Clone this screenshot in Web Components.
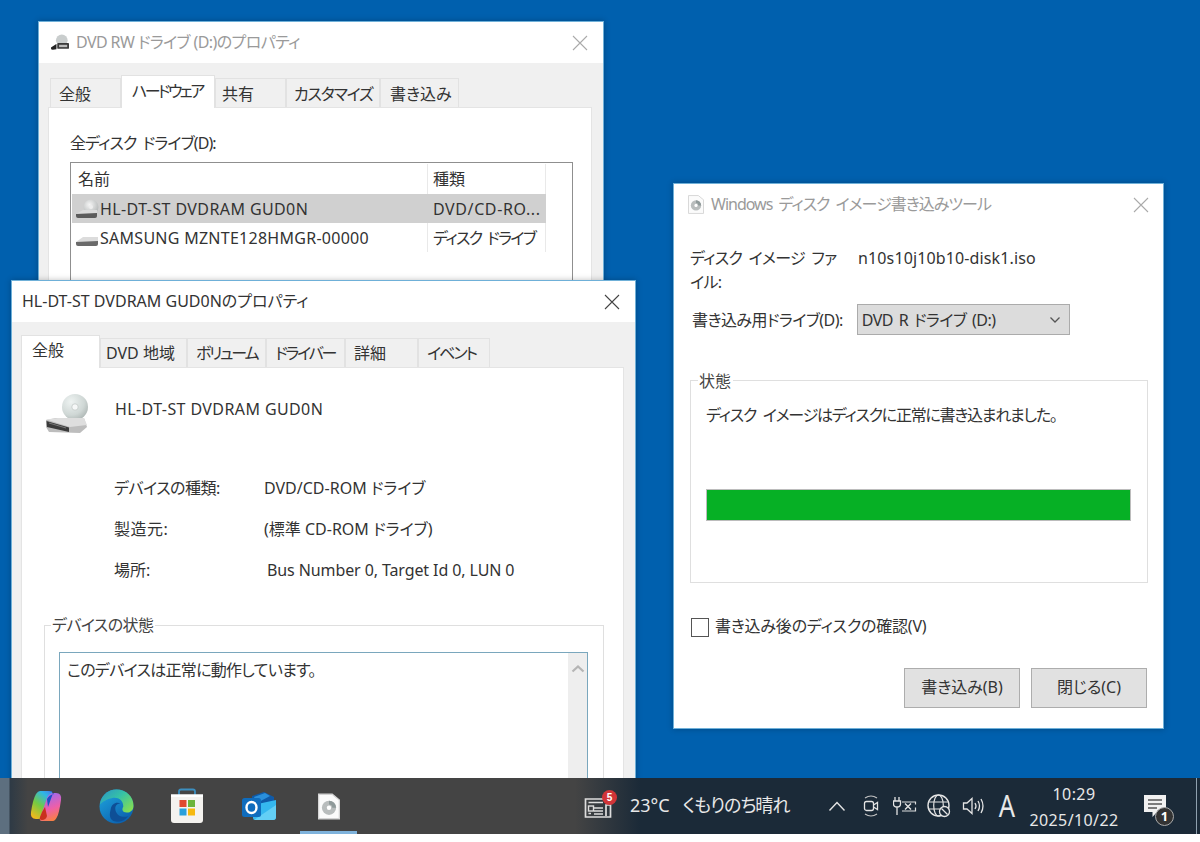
<!DOCTYPE html>
<html lang="ja"><head><meta charset="utf-8"><title>Desktop</title>
<style>
html,body{margin:0;padding:0;width:1200px;height:842px;overflow:hidden;background:#fff}
body{display:flex;flex-direction:column;font:16px/1.2 "Noto Sans","Noto Sans CJK JP",sans-serif;font-feature-settings:"palt";color:#333}
win-desktop{flex:0 0 778px}
task-bar{flex:0 0 56px}
#w1{left:38px;top:21px;width:566px;height:420px;--tl:2px;--tp:4px;--sb:0px}
#w2{left:11px;top:280px;width:625px;height:520px;--tl:0px;--tp:2px;--sb:3px}
#w3{left:673px;top:183px;width:491px;height:546px}
</style></head><body>
<win-desktop>
  <win-frame id="w1" heading="DVD RW ドライブ (D:)のプロパティ" ls="-.6" inactive icon="dvd" bodypad="12px 11px 0 9px">
    <win-tabs>
      <win-tab w="71" pl="8">全般</win-tab><win-tab w="94" pl="10" ls="-2.6" selected>ハードウェア</win-tab><win-tab w="71" pl="6">共有</win-tab><win-tab w="94" pl="7" ls="-1.2">カスタマイズ</win-tab><win-tab w="79" pl="9">書き込み</win-tab>
    </win-tabs>
    <win-panel pad="25px 18px 0 21px"><disk-list></disk-list></win-panel>
  </win-frame>
  <win-frame id="w2" heading="HL-DT-ST DVDRAM GUD0Nのプロパティ" bodypad="13px 11px 0 9px">
    <win-tabs>
      <win-tab w="79" pl="10" selected>全般</win-tab><win-tab w="87" pl="5">DVD 地域</win-tab><win-tab w="79" pl="8" ls="-2.2">ボリューム</win-tab><win-tab w="79" pl="8" ls="-2.2">ドライバー</win-tab><win-tab w="73" pl="8">詳細</win-tab><win-tab w="72" pl="8" ls="-2">イベント</win-tab>
    </win-tabs>
    <win-panel pad="26px 19px 0 22px"><device-general></device-general></win-panel>
  </win-frame>
  <win-frame id="w3" heading="Windows ディスク イメージ書き込みツール" ls="-1" ws="3" inactive icon="file" bodypad="0" white>
    <burn-form></burn-form>
  </win-frame>
</win-desktop>
<task-bar></task-bar>
<script>
const svg=(w,h,vb,inner,extra='')=>`<svg xmlns="http://www.w3.org/2000/svg" width="${w}" height="${h}" viewBox="${vb}" ${extra} style="display:block;flex:none">${inner}</svg>`;
const sp=(ls,t,ws=0)=>`<span style="letter-spacing:${ls}px;word-spacing:${ws}px">${t}</span>`;
let uid=0;
const ICON={
  disc(w,h){const id='d'+(++uid);return svg(w,h,'0 0 44 40',`<defs><radialGradient id="${id}" cx=".35" cy=".3" r=".85"><stop offset="0" stop-color="#eef3f2"/><stop offset=".6" stop-color="#cfd7d5"/><stop offset="1" stop-color="#a3acaa"/></radialGradient></defs>
    <circle cx="31" cy="13" r="13" fill="url(#${id})"/><circle cx="31" cy="13" r="3.2" fill="#f6f8f8" stroke="#b5bcbb" stroke-width=".6"/>
    <path d="M2 26 12 24 40 24 43 33 36 39 5 38 2 33Z" fill="#bdbdbd"/><path d="M2 25.5 14 24 40 24 43 31 26 33Z" fill="#dedede"/>
    <path d="M2.5 27 25 33.5 25 38 3 33Z" fill="#3a3a3a"/><path d="M5 29 22 34" stroke="#777" stroke-width="1"/>`)},
  drive(w,h){return svg(w,h,'0 0 24 20',`<path d="M1 13 8 8 23 8 23 13 8 14Z" fill="#dcdcdc"/><path d="M1 13 23 12 23 15Q23 17 21 17L3 17Q1 17 1 15Z" fill="#6a6a6a"/>`)},
  discsm(w,h){const id='d'+(++uid);return svg(w,h,'0 0 24 22',`<defs><radialGradient id="${id}" cx=".4" cy=".35" r=".8"><stop offset="0" stop-color="#f5f5f5"/><stop offset="1" stop-color="#a9adad"/></radialGradient></defs><circle cx="16" cy="8" r="7.5" fill="url(#${id})"/><circle cx="16" cy="8" r="2" fill="#eee"/><path d="M1 15 8 11 22 11 22 15 8 16Z" fill="#dcdcdc"/><path d="M1 15 22 14 22 17Q22 19 20 19L3 19Q1 19 1 17Z" fill="#5c5c5c"/>`)},
  dvd(w,h){return svg(w,h,'0 0 22 20',`<circle cx="13" cy="7" r="6.5" fill="#c9cdcd"/><path d="M1 15 7 11 21 10 21 15 7 16Z" fill="#d8d8d8"/><path d="M1 15 7 11 7 17 3 17.5Q1 17.5 1 16Z" fill="#222"/><rect x="8" y="10" width="13" height="6.5" rx="1" fill="#3b3b3b"/><rect x="10" y="12" width="9" height="2.6" fill="#bbb"/>`)},
  file(w,h){return svg(w,h,'0 0 17 20',`<path d="M.5.5H11L16.5 5V19.5H.5Z" fill="#fbfbfb" stroke="#d5d5d5"/><circle cx="8.5" cy="11" r="5.5" fill="#b9bdbd"/><circle cx="8.5" cy="11" r="1.7" fill="#fff"/><path d="M8.5 5.5A5.5 5.5 0 0 1 14 11H11A2.5 2.5 0 0 0 8.5 8.5Z" fill="#8f9a9a"/>`)},
  close(c){return svg(16,16,'0 0 16 16',`<path d="M1 1 15 15M15 1 1 15" stroke="${c}" stroke-width="1.1" fill="none"/>`)},
  copilot(){return svg(32,32,'0 0 32 32',`<defs>
    <linearGradient id="cpa" x1=".2" y1="1" x2=".8" y2="0"><stop offset="0" stop-color="#f5b91c"/><stop offset=".45" stop-color="#74cb42"/><stop offset=".85" stop-color="#2fb6e6"/><stop offset="1" stop-color="#3f8fe8"/></linearGradient>
    <linearGradient id="cpb" x1=".7" y1="1" x2=".4" y2="0"><stop offset="0" stop-color="#f9833a"/><stop offset=".45" stop-color="#ee5fa8"/><stop offset="1" stop-color="#9a6af0"/></linearGradient></defs>
    <path d="M10 1H20Q23 1 22 4L15 24Q13 29 8 29H6Q0 29 1 22 3 9 6 4 8 1 10 1Z" fill="url(#cpa)"/>
    <path d="M23 31H12Q9 31 10 28L17 8Q19 3 24 3H26Q32 3 31 10 29 24 27 27 25 31 23 31Z" fill="url(#cpb)"/>
    <path d="M18 1H21Q24 2 22 6L18 17 17 9Q19 5 24 4 22 1 18 1Z" fill="#1d4fc4"/><path d="M12 22 15 17 17 26Q16 30 12 30 9 30 10 27Z" fill="#c9301e"/>`)},
  edge(){return svg(35,35,'0 0 36 36',`<defs>
    <linearGradient id="eda" x1="0" y1="0" x2="1" y2=".8"><stop offset="0" stop-color="#2a93c6"/><stop offset=".5" stop-color="#36c2a6"/><stop offset="1" stop-color="#84de52"/></linearGradient>
    <linearGradient id="edb" x1="0" y1="0" x2=".7" y2="1"><stop offset="0" stop-color="#20a9e0"/><stop offset="1" stop-color="#0b5fae"/></linearGradient></defs>
    <circle cx="18" cy="18" r="17.5" fill="url(#edb)"/>
    <path d="M1 16C2 7 9 .5 18 .5 28 .5 35.5 8 35.5 17 35.5 23 31 25 27 24 23 23 24 20 25 18 25 11 19 8 13 9.5 6 11 3 14 1 16Z" fill="url(#eda)"/>
    <path d="M12 21C13 15 18 13 22 15 18 15 16 18 17 22 18 27 24 30 30 28 26 33 20 35 15 33 10 30 11 25 12 21Z" fill="#0e4f96"/>`)},
  store(){return svg(34,36,'0 0 34 36',`<path d="M9 8V3.5Q9 1.5 11 1.5H23Q25 1.5 25 3.5V8" fill="none" stroke="#3c8fc0" stroke-width="1.8"/><path d="M1 6.5H33V32Q33 35 30 35H4Q1 35 1 32Z" fill="#f4f2ef"/><path d="M1 6.5H33V9H1Z" fill="#fff"/>
    <rect x="9.5" y="12" width="7" height="7" fill="#e0482f"/><rect x="18" y="12" width="7" height="7" fill="#6db43a"/><rect x="9.5" y="20.5" width="7" height="7" fill="#2aa0dc"/><rect x="18" y="20.5" width="7" height="7" fill="#f6b90f"/>`)},
  outlook(){return svg(36,30,'0 0 36 30',`<path d="M11 5 23 1 33 6V14H11Z" fill="#0f5aa8"/><path d="M13 6 24 2 29 5 16 12Z" fill="#2a8fdb"/><path d="M12 14 35 9V26Q35 29 32 29H14Q12 29 12 27Z" fill="#35b8ef"/><path d="M13 29 35 14V26Q35 29 32 29Z" fill="#63cff5"/>
    <rect x="1" y="7" width="19" height="19" rx="2.5" fill="#0f6cbd"/><ellipse cx="10.5" cy="16.5" rx="5" ry="5.5" fill="none" stroke="#fff" stroke-width="2.4"/>`)},
  news(){return svg(28,26,'0 0 28 26',`<path d="M22 6H1.5V24H26.5V12H22V23" fill="none" stroke="#ddd" stroke-width="1.7"/><path d="M4.5 9.5H19M4.5 20.5H7M10 15H19M10 18H19M10 21H19" stroke="#ddd" stroke-width="1.5" fill="none"/><rect x="4.5" y="13" width="5" height="5" fill="none" stroke="#ddd" stroke-width="1.4"/>`)},
  up(){return svg(18,12,'0 0 18 12',`<path d="M1.5 10.5 9 2.5 16.5 10.5" fill="none" stroke="#e4e4e4" stroke-width="1.4"/>`)},
  cam(){return svg(18,26,'0 0 18 26',`<path d="M3 5Q9 1 15 5M3 21Q9 25 15 21" fill="none" stroke="#c4c4c4" stroke-width="1.2"/><rect x="2.5" y="8.5" width="9" height="9" rx="2" fill="none" stroke="#e4e4e4" stroke-width="1.3"/><path d="M11.5 12 15.5 9.5V16.5L11.5 14" fill="none" stroke="#e4e4e4" stroke-width="1.3"/>`)},
  plug(){return svg(24,20,'0 0 24 20',`<path d="M2 1V5M6 1V5M.5 5H7.5V8Q7.5 11 4 11 .5 11 .5 8ZM4 11V19" fill="none" stroke="#e4e4e4" stroke-width="1.3"/><path d="M9 6H22.5V8.5M22.5 11.5V15H9" fill="none" stroke="#ddd" stroke-width="1.2"/><path d="M12 7.5 18 13.5M18 7.5 12 13.5" stroke="#e4e4e4" stroke-width="1.4"/>`)},
  globe(){return svg(24,24,'0 0 24 24',`<circle cx="11.5" cy="11.5" r="10.5" fill="none" stroke="#e4e4e4" stroke-width="1.4"/><ellipse cx="11.5" cy="11.5" rx="4.8" ry="10.5" fill="none" stroke="#e4e4e4" stroke-width="1.2"/><path d="M1.5 8H21.5M1.5 15H21.5" stroke="#e4e4e4" stroke-width="1.2"/><circle cx="17.5" cy="17.5" r="5" fill="#1b2a38" stroke="#e4e4e4" stroke-width="1.3"/><path d="M14.5 14.5 20.5 20.5" stroke="#e4e4e4" stroke-width="1.3"/>`)},
  speaker(){return svg(24,20,'0 0 24 20',`<path d="M1.5 7H5L10 2.5V17.5L5 13H1.5Z" fill="none" stroke="#e4e4e4" stroke-width="1.3"/><path d="M13 7Q15 10 13 13M16 5Q19 10 16 15M19 3Q23 10 19 17" fill="none" stroke="#e4e4e4" stroke-width="1.3"/>`)},
  note(){return svg(24,24,'0 0 24 24',`<path d="M1 1H23V18H14L9.5 23V18H1Z" fill="#f1f1f1"/><path d="M5 6H19M5 10H19M5 14H14" stroke="#555" stroke-width="1.3"/>`)},
  chev(c='#555'){return svg(12,8,'0 0 12 8',`<path d="M1.5 1.5 6 6 10.5 1.5" fill="none" stroke="${c}" stroke-width="1.3"/>`)},
};
const def=(n,html,setup)=>customElements.define(n,class extends HTMLElement{
  constructor(){super();this.attachShadow({mode:'open'})}
  connectedCallback(){this.shadowRoot.innerHTML=typeof html==='function'?html(this):html;setup&&setup(this)}
});
def('win-desktop',`<style>:host{display:block;position:relative;overflow:hidden;background:#0060ae}</style><slot></slot>`);
def('win-frame',el=>{
  const ina=el.hasAttribute('inactive'),ic=el.getAttribute('icon');
  return `<style>
  :host{position:absolute;display:flex;flex-direction:column;box-sizing:border-box;background:#f0f0f0;border:1px solid #6fb0d8;box-shadow:0 0 6px rgba(0,0,0,.25)}
  .bar{flex:0 0 41px;background:#fff;display:flex;align-items:center;padding:0 ${ic==='file'?14:15}px 0 ${ic==='file'?14:ic?11:10}px;gap:${ic==='file'?7:6}px;font-size:16px;color:${ina?'#9a9a9a':'#333'}}
  .t{flex:1;white-space:nowrap;letter-spacing:${el.getAttribute('ls')||0}px;word-spacing:${el.getAttribute('ws')||0}px}
  .body{flex:1;min-height:0;padding:${el.getAttribute('bodypad')};${el.hasAttribute('white')?'background:#fff':''}}
  </style><div class="bar">${ic?ICON[ic](ic==='file'?16:20,ic==='file'?19:18):''}<span class="t">${el.getAttribute('heading')}</span>${ICON.close(ina?'#aaa':'#444')}</div><div class="body"><slot></slot></div>`});
def('win-tabs',`<style>:host{display:flex;align-items:flex-end;padding-left:var(--tl,0);height:32px;position:relative;z-index:1}</style><slot></slot>`);
def('win-tab',el=>{const s=el.hasAttribute('selected');return `<style>
  :host{box-sizing:border-box;display:flex;align-items:center;flex:0 0 ${el.getAttribute('w')}px;height:${s?33:29}px;margin-bottom:${s?-1:0}px;background:${s?'#fff':'#f0f0f0'};border:1px solid #e2e2e2;border-bottom:0;color:#333;padding-left:${el.getAttribute('pl')||0}px;${s?'padding-bottom:var(--sb,3px)':'padding-top:var(--tp,2px)'};white-space:nowrap;letter-spacing:${el.getAttribute('ls')||0}px}
  </style><slot></slot>`});
def('win-panel',el=>`<style>:host{display:block;box-sizing:border-box;height:100%;background:#fff;border:1px solid #e4e4e4;padding:${el.getAttribute('pad')}}</style><slot></slot>`);
def('win-group',el=>`<style>
  :host{display:block;position:relative;box-sizing:border-box;border:1px solid #dfdfdf}
  .lg{position:absolute;left:${el.getAttribute('lx')||8}px;top:${el.getAttribute('lt')||-11}px;background:#fff;padding:0 2px 0 1px;line-height:20px;color:#444;letter-spacing:${el.getAttribute('ls')||0}px}
  </style><span class="lg">${el.getAttribute('label')}</span><slot></slot>`);
def('win-btn',`<style>:host{display:flex;box-sizing:border-box;width:116px;height:40px;align-items:center;justify-content:center;background:#e1e1e1;border:1px solid #adadad;color:#333}</style><slot></slot>`);
def('disk-list',()=>`<style>
  :host{display:block;height:300px}
  .lb{display:block;color:#333;margin-bottom:9px;line-height:20px;letter-spacing:-.9px;word-spacing:3px}
  .box{box-sizing:border-box;border:1px solid #8f8f8f;height:240px;padding:1px;background:#fff}
  .g{display:grid;grid-template-columns:355px 119px;width:474px;background:linear-gradient(#e9e9e9,#e9e9e9) 355px 0/1px 100% no-repeat,linear-gradient(#e9e9e9,#e9e9e9) 473px 0/1px 100% no-repeat}
  .c{display:flex;align-items:center;box-sizing:border-box;height:29px;white-space:nowrap;overflow:hidden;padding-top:2px}
  .h{height:30px;padding-left:6px}
  .n{gap:1px;padding-left:3px}.k{padding-left:6px}
  .sel{background:#d0d0d0}
  </style><span class="lb">全ディスク ドライブ(D):</span><div class="box"><div class="g">
  <div class="c h">名前</div><div class="c h">種類</div>
  <div class="c n sel">${ICON.discsm(24,22)}${sp(.4,'HL-DT-ST DVDRAM GUD0N')}</div><div class="c k sel">${sp(.6,'DVD/CD-RO...')}</div>
  <div class="c n">${ICON.drive(24,20)}${sp(.27,'SAMSUNG MZNTE128HMGR-00000')}</div><div class="c k">${sp(-1.6,'ディスク ドライブ',3)}</div>
  </div></div>`);
def('device-general',()=>`<style>
  :host{display:block}
  .top{display:flex;gap:27px;align-items:flex-start;height:61px}
  .top span{margin-top:6px;letter-spacing:.4px}
  .g{display:grid;grid-template-columns:150px 1fr;grid-auto-rows:41px;align-items:center;margin:12px 0 0 0;padding-left:70px;line-height:22px}
  .v3{padding-left:3px;letter-spacing:-.1px}
  win-group{margin:35px 0 0 0;height:300px;width:560px;padding:26px 15px 0 14px}
  .tb{box-sizing:border-box;height:260px;border:1px solid #7aa7bd;display:flex;background:#fff}
  .tb p{flex:1;margin:0;padding:6px 7px;line-height:22px;letter-spacing:-.7px}
  .sb{flex:0 0 19px;background:#eee;display:flex;justify-content:center;padding-top:11px;align-items:flex-start}
  </style><div class="top">${ICON.disc(44,40)}<span>HL-DT-ST DVDRAM GUD0N</span></div>
  <div class="g">${sp(-.5,'デバイスの種類:')}<span>DVD/CD-ROM ドライブ</span>${sp(.5,'製造元:')}<span>(標準 CD-ROM ドライブ)</span><span>場所:</span><span class="v3">Bus Number 0, Target Id 0, LUN 0</span></div>
  <win-group label="デバイスの状態" lx="6" ls="-.6"><div class="tb"><p>このデバイスは正常に動作しています。</p><div class="sb">${svg(14,9,'0 0 14 9','<path d="M1.5 7.5 7 2.5 12.5 7.5" fill="none" stroke="#b5b5b5" stroke-width="2.2"/>')}</div></div></win-group>`);
def('burn-form',()=>`<style>
  :host{display:flex;flex-direction:column;background:#fff;height:100%;box-sizing:border-box;padding:21px 16px 0 16px}
  .file{display:grid;grid-template-columns:168px 1fr;line-height:24px}
  .file .l{letter-spacing:-.7px;word-spacing:3px}
  .drv{display:flex;align-items:center;margin-top:10px;height:31px;gap:14px;padding-left:2px}
  .drv span{padding-top:2px}
  .sel{box-sizing:border-box;width:213px;height:31px;background:#dcdcdc;border:1px solid #ababab;display:flex;align-items:center;justify-content:space-between;padding:0 8px 0 4px}
  win-group{margin-top:45px;height:203px;width:458px;flex:none;padding:24px 16px 0 15px}
  .msg{line-height:20px;letter-spacing:-1.25px;word-spacing:4px;white-space:nowrap}
  .bar{box-sizing:border-box;margin-top:64px;height:32px;width:425px;background:#06b025;border:1px solid #bcbcbc}
  .chk{display:flex;align-items:center;gap:6px;margin-top:34px;height:20px;padding-left:1px}
  .box{box-sizing:border-box;width:18px;height:19px;border:1px solid #555;background:#fff}
  .btns{display:flex;justify-content:flex-end;gap:11px;margin-top:31px}
  </style>
  <div class="file"><span class="l">ディスク イメージ ファ<br>イル:</span>${sp(.13,'n10s10j10b10-disk1.iso')}</div>
  <div class="drv">${sp(-.55,'書き込み用ドライブ(D):')}<div class="sel">${sp(-.5,'DVD R ドライブ (D:)',2)}${ICON.chev()}</div></div>
  <win-group label="状態" lx="7" lt="-10"><div class="msg">ディスク イメージはディスクに正常に書き込まれました。</div><div class="bar"></div></win-group>
  <div class="chk"><div class="box"></div>${sp(-.2,'書き込み後のディスクの確認(V)')}</div>
  <div class="btns"><win-btn>書き込み(B)</win-btn><win-btn>閉じる(C)</win-btn></div>`);
def('app-slot',el=>`<style>:host{position:relative;display:flex;flex:0 0 71px;height:56px;align-items:center;justify-content:center;${el.getAttribute('nudge')?'left:'+el.getAttribute('nudge')+'px;':''}}
  .u{position:absolute;left:7px;right:7px;bottom:0;height:3px;background:#7fb3dc}</style>${ICON[el.getAttribute('icon')](+el.getAttribute('w')||undefined,+el.getAttribute('h')||undefined)}${el.hasAttribute('active')?'<i class="u"></i>':''}`);
def('tray-slot',el=>`<style>:host{display:flex;flex:0 0 ${el.getAttribute('w')}px;height:56px;align-items:center;justify-content:center}</style>${ICON[el.getAttribute('icon')]()}`);
def('task-bar',()=>`<style>
  :host{display:flex;align-items:center;color:#e8e8e8;background:linear-gradient(90deg,#5d6f7f 0,#5d6f7f 9px,#2e3a45 10px,#444 28px,#444 575px,#1b2a38 640px,#1b2a38 100%);padding-left:10px;box-sizing:border-box;position:relative}
  .apps{display:flex}
  .news{position:relative;margin-left:219px;display:flex;flex:0 0 28px;height:26px}
  .badge{position:absolute;left:18px;top:-3px;width:15px;height:15px;border-radius:50%;background:#d13438;color:#fff;font:bold 10px/15px "Liberation Sans",sans-serif;text-align:center}
  .w{margin-left:18px;font-size:18px;white-space:nowrap;width:190px;display:flex;gap:13px}
  .w .j{letter-spacing:-1px}
  .tray{display:flex;align-items:center}
  .a{flex:0 0 32px;text-align:center;font-size:30px;line-height:56px;font-family:"Noto Sans",sans-serif;transform:scaleX(.85);color:#e8e8e8;font-weight:400}
  .clock{flex:0 0 104px;text-align:center;line-height:26px;margin-left:-1px;margin-top:2px;letter-spacing:.4px}
  .note{position:relative;flex:0 0 24px;margin-left:17px;height:24px}
  .n1{position:absolute;left:12px;top:13px;width:19px;height:19px;border-radius:50%;box-sizing:border-box;background:#333;border:1px solid #aaa;color:#fff;font:bold 13px/17px "Noto Sans",sans-serif;text-align:center}
  .gap{position:absolute;right:3px;top:0;bottom:0;width:1px;background:#8fa0ae}
  </style>
  <div class="apps"><app-slot icon="copilot"></app-slot><app-slot icon="edge"></app-slot><app-slot icon="store" nudge="-1"></app-slot><app-slot icon="outlook"></app-slot><app-slot icon="file" w="22" h="27" nudge="-1" active></app-slot></div>
  <div class="news">${ICON.news()}<span class="badge">5</span></div>
  <div class="w"><span>23°C</span><span class="j">くもりのち晴れ</span></div>
  <div class="tray"><tray-slot icon="up" w="34"></tray-slot><tray-slot icon="cam" w="33"></tray-slot><tray-slot icon="plug" w="35"></tray-slot><tray-slot icon="globe" w="34"></tray-slot><tray-slot icon="speaker" w="35"></tray-slot><div class="a">A</div></div>
  <div class="clock">10:29<br>2025/10/22</div>
  <div class="note">${ICON.note()}<span class="n1">1</span></div><i class="gap"></i>`);
</script>
</body></html>
